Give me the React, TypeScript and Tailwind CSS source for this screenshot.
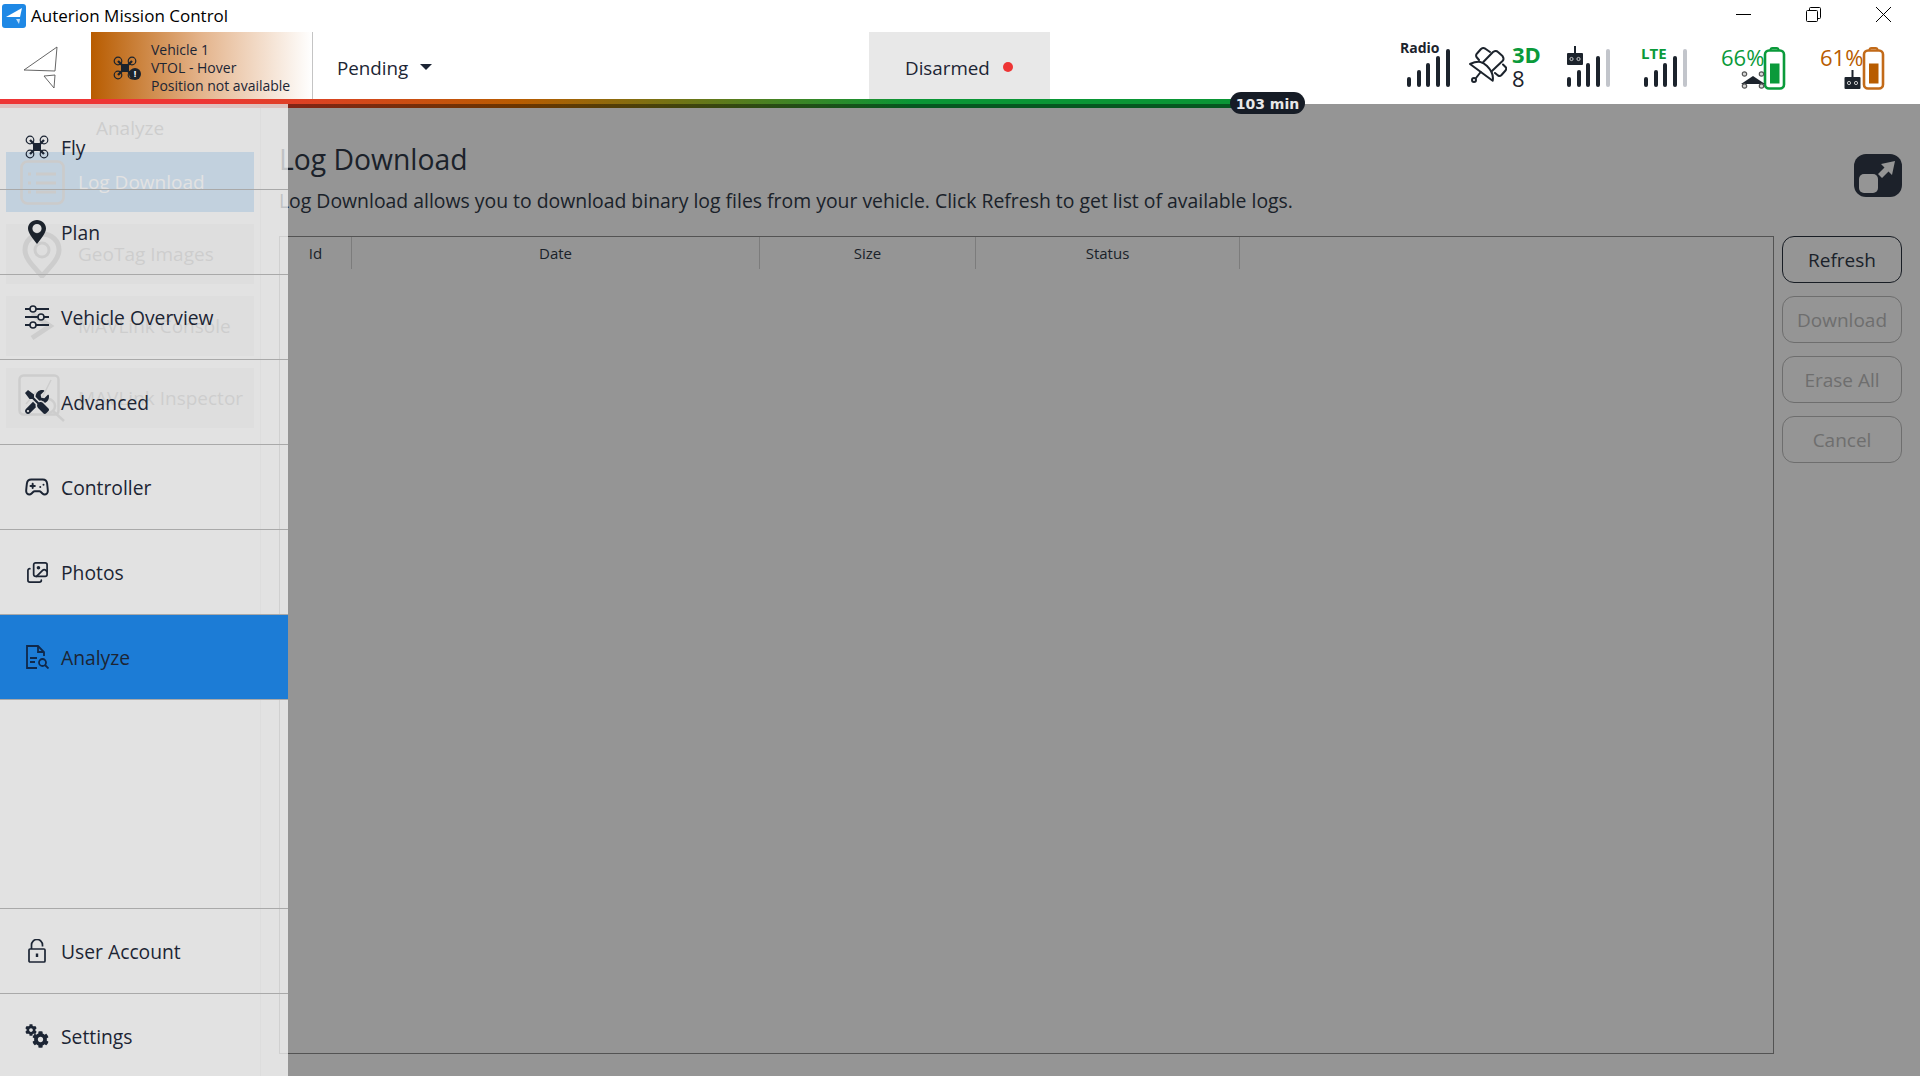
import { FaCog, FaTools } from "react-icons/fa";
import { Gamepad2, Images } from "lucide-react";

const font = { fontFamily: '"Open Sans", "Noto Sans", sans-serif' };

function Drone({ className }: { className?: string }) {
  return (
    <svg viewBox="0 0 24 24" className={className} fill="none" stroke="currentColor">
      <path d="M5 5 L19 19 M19 5 L5 19" strokeWidth="2.4" />
      <rect x="8" y="8" width="8" height="8" fill="currentColor" stroke="none" />
      <circle cx="5" cy="5" r="3.8" strokeWidth="1.2" />
      <circle cx="19" cy="5" r="3.8" strokeWidth="1.2" />
      <circle cx="5" cy="19" r="3.8" strokeWidth="1.2" />
      <circle cx="19" cy="19" r="3.8" strokeWidth="1.2" />
    </svg>
  );
}

function Pin() {
  return (
    <svg viewBox="0 0 18 24" className="w-[18px] h-[24px]">
      <path
        fillRule="evenodd"
        d="M9 0 C4 0 0 3.8 0 8.6 C0 13 5 19 9 24 C13 19 18 13 18 8.6 C18 3.8 14 0 9 0 Z M9 4 A4.6 4.6 0 1 1 9 13.2 A4.6 4.6 0 1 1 9 4 Z"
        fill="#1c232c"
      />
    </svg>
  );
}

function Sliders() {
  return (
    <svg viewBox="0 0 24 24" className="w-6 h-6" fill="#e2e2e2" stroke="currentColor" strokeWidth="1.6">
      <path d="M0 4 H24 M0 12 H24 M0 20 H24" strokeWidth="1.8" />
      <circle cx="8" cy="4" r="3" />
      <circle cx="16" cy="12" r="3" />
      <circle cx="8" cy="20" r="3" />
    </svg>
  );
}

function AnalyzeIcon() {
  return (
    <svg viewBox="0 0 24 24" className="w-6 h-6" fill="none" stroke="#10284a" strokeWidth="1.8">
      <path d="M12 23 H2 V1 H13 L19 7 V11" />
      <path d="M13 1 V7 H19" />
      <path d="M5 13 H12 M5 17 H10" />
      <circle cx="17.5" cy="17.5" r="3.5" />
      <path d="M20 20 L23.5 23.5" />
    </svg>
  );
}

function LockIcon() {
  return (
    <svg viewBox="0 0 18 24" className="w-[18px] h-[24px]" fill="none" stroke="#1c2534" strokeWidth="1.7">
      <rect x="1" y="10" width="16" height="13" rx="1" />
      <path d="M3.5 10 V6 A5.5 5.5 0 0 1 14.5 6 V7.5" />
      <path d="M9 14.5 V18" strokeWidth="2.4" />
    </svg>
  );
}

function GearsIcon() {
  return (
    <div className="relative w-[24px] h-[24px] text-[#1c2534]">
      <FaCog size={12} className="absolute left-0 top-0" />
      <FaCog size={17} className="absolute right-0 bottom-0" />
    </div>
  );
}

function RcBox({ className }: { className?: string }) {
  return (
    <svg viewBox="0 0 16 19" className={className}>
      <rect x="7" y="0" width="2" height="8" fill="#1c232c" />
      <rect x="0" y="7" width="16" height="12" rx="1" fill="#1c232c" />
      <circle cx="4.5" cy="13" r="1.6" fill="none" stroke="#d8d8d8" strokeWidth="0.9" />
      <circle cx="11.5" cy="13" r="1.6" fill="none" stroke="#d8d8d8" strokeWidth="0.9" />
    </svg>
  );
}

function SignalBars({ lastOff }: { lastOff?: boolean }) {
  const heights = [10, 17, 24, 31, 38];
  return (
    <div className="flex items-end gap-[5.7px] h-[38px]">
      {heights.map((h, i) => (
        <div
          key={i}
          className={`w-[4px] rounded-full ${lastOff && i === 4 ? "bg-[#c2c5cb]" : "bg-[#1c232c]"}`}
          style={{ height: h }}
        />
      ))}
    </div>
  );
}

function Battery({ color, fill }: { color: string; fill: string }) {
  return (
    <svg viewBox="0 0 22 43" className="w-[23px] h-[43px]" fill="none">
      <path d="M7 3 Q7 1 9 1 H13 Q15 1 15 3" stroke={color} strokeWidth="2" />
      <rect x="1.5" y="3.5" width="19" height="38" rx="4" stroke={color} strokeWidth="2.6" />
      <rect x="6.5" y="16.5" width="9.5" height="20" fill={fill} />
    </svg>
  );
}

function NavRow({ icon, label, active }: { icon: React.ReactNode; label: string; active?: boolean }) {
  return (
    <div
      className={`h-[85px] flex items-center shrink-0 border-b border-[#a9a9a9] ${active ? "bg-[#1c7cd6]" : ""}`}
    >
      <div className="w-[61px] flex justify-center pl-[13px] text-[#1c2534]">{icon}</div>
      <span className="mt-[2px] text-[19.3px] text-[#1c2534]">{label}</span>
    </div>
  );
}

function GhostRow({ icon, label, selected }: { icon: React.ReactNode; label: string; selected?: boolean }) {
  return (
    <div className={`h-[60px] flex items-center ${selected ? "bg-[#3e96e7] text-white" : "bg-[#e7e7e7] text-[#808080]"}`}>
      <div className="w-[72px] flex justify-center">{icon}</div>
      <span className="text-[19px]">{label}</span>
    </div>
  );
}

function ActionButton({ label, enabled }: { label: string; enabled?: boolean }) {
  return (
    <div
      className={`h-[47px] pt-[2px] flex items-center justify-center rounded-[12px] border text-[19px] ${
        enabled ? "border-[#2a323e] text-[#303a48]" : "border-[#bcbcbc] text-[#bdbdbd]"
      }`}
    >
      {label}
    </div>
  );
}

export default function App() {
  return (
    <div className="relative w-full h-[1076px] overflow-hidden bg-white flex flex-col" style={font}>
      {/* window title bar */}
      <div className="h-[32px] flex items-center shrink-0">
        <div className="ml-[2px] w-[24px] h-[24px] rounded-[3px] bg-[#1e88e5] flex items-center justify-center">
          <svg viewBox="0 0 24 24" className="w-[24px] h-[24px]">
            <path d="M4 13 L20 4 L18 13 Z" fill="white" />
            <path d="M14 15 L18 15 L17 20 Z" fill="#bfe0fb" />
          </svg>
        </div>
        <span className="ml-[5px] text-[17px] text-black">Auterion Mission Control</span>
        <div className="ml-auto -mt-[3px] flex items-center pr-[29px] gap-[55px]">
          <svg viewBox="0 0 15 15" className="w-[15px] h-[15px]" fill="none" stroke="black">
            <path d="M0 7.5 H15" />
          </svg>
          <svg viewBox="0 0 15 15" className="w-[15px] h-[15px]" fill="none" stroke="black">
            <rect x="0.5" y="3.5" width="11" height="11" rx="1" />
            <path d="M3.5 3.5 V1.5 Q3.5 0.5 4.5 0.5 H13.5 Q14.5 0.5 14.5 1.5 V10.5 Q14.5 11.5 13.5 11.5 H11.5" />
          </svg>
          <svg viewBox="0 0 15 15" className="w-[15px] h-[15px]" fill="none" stroke="black">
            <path d="M0 0 L15 15 M15 0 L0 15" />
          </svg>
        </div>
      </div>

      {/* toolbar */}
      <div className="h-[72px] flex items-start shrink-0">
        <div className="w-[91px] h-[67px] flex items-center justify-center">
          <svg viewBox="0 0 36 44" className="w-[36px] h-[44px] mt-[2px] -ml-[10px]" fill="none" stroke="#555" strokeWidth="0.9">
            <path d="M1 25 L34 2 L32 26 Z" />
            <path d="M21 31 L32 30 L31 43 Z" />
          </svg>
        </div>
        <div className="w-[222px] h-[67px] flex items-center border-r border-[#c4c4c4] bg-[linear-gradient(90deg,#b85c00_0%,#e4b48c_50%,#ffffff_100%)]">
          <div className="relative w-[60px] flex justify-center pl-[8px] pt-[4px] text-[#1c232c]">
            <Drone className="w-[24px] h-[24px]" />
            <div className="absolute left-[38px] top-[16px] w-[12px] h-[12px] rounded-full bg-[#1c232c] text-white text-[9px] font-bold leading-[12px] text-center">!</div>
          </div>
          <div className="pt-[4px] text-[14px] leading-[18px] text-[#1c2534] whitespace-nowrap">
            <div>Vehicle 1</div>
            <div>VTOL - Hover</div>
            <div>Position not available</div>
          </div>
        </div>
        <div className="w-[556px] shrink-0 h-[67px] pt-[5px] flex items-center pl-[24px] text-[18.8px] text-[#1c2534]">
          Pending
          <div className="ml-[12px] -mt-[2px] w-0 h-0 border-x-[6px] border-x-transparent border-t-[6px] border-t-[#1c2534]" />
        </div>
        <div className="w-[181px] h-[67px] pt-[5px] bg-[#e8e8e8] flex items-center pl-[36px] text-[18.8px] text-[#1c2534]">
          Disarmed
          <div className="ml-[13px] -mt-[3px] w-[10px] h-[10px] rounded-full bg-[#ee3535]" />
        </div>

        {/* status indicators */}
        <div className="ml-auto h-[67px] relative w-[525px] shrink-0">
          <div className="absolute left-[5px] top-[8px] text-[14px] leading-[16px] font-bold text-[#1c232c]">Radio</div>
          <div className="absolute left-[12px] top-[17px]"><SignalBars /></div>

          <svg viewBox="0 0 38 40" className="absolute left-[74px] top-[15px] w-[38px] h-[40px]" fill="none" stroke="#1c232c" strokeWidth="2" strokeLinecap="round" strokeLinejoin="round">
            <path d="M14.3 15 L24 5 Q27 3 29 5 L33.5 9 Q35.5 12 33.5 14 L22.7 24.3" />
            <path d="M1 17 C10 13 14 15 18 19 C22 23 25 27 23.7 33.7 Z" />
            <circle cx="5" cy="33" r="2" />
            <path d="M7 31 L11.7 25" />
            <path d="M10 13 L7.5 10 Q6.5 8 8 6.5 L12 2 Q14 0.5 16 1.5 L21 5" />
            <path d="M26 26 L29 28.5 Q31 29.5 32.5 28 L36.5 23.5 Q38 21.5 36.5 20 L34 17.5" />
          </svg>
          <div className="absolute left-[117px] top-[10px] text-[22px] leading-[24px] font-bold text-[#0a9a3a]">3D</div>
          <div className="absolute left-[117px] top-[34px] text-[22px] leading-[24px] text-[#1c232c]">8</div>

          <RcBox className="absolute left-[172px] top-[14px] w-[16px] h-[19px]" />
          <div className="absolute left-[172px] top-[17px]"><SignalBars lastOff /></div>

          <div className="absolute left-[246px] top-[13px] text-[15px] leading-[16px] font-bold text-[#0a9a3a]">LTE</div>
          <div className="absolute left-[249px] top-[17px]"><SignalBars lastOff /></div>

          <div className="absolute left-[326px] top-[13px] text-[22px] leading-[24px] text-[#0a9a3a]">66%</div>
          <div className="absolute left-[368px] top-[15px]"><Battery color="#0a9a3a" fill="#0a9a3a" /></div>
          <svg viewBox="0 0 24 18" className="absolute left-[346px] top-[39px] w-[24px] h-[18px]">
            <path d="M0 13 L12 5 L24 13 Z" fill="#1c232c" />
            <g fill="#d8d8d8" stroke="#555" strokeWidth="1.2">
              <circle cx="3.5" cy="3" r="2.2" />
              <circle cx="20.5" cy="3" r="2.2" />
              <circle cx="3.5" cy="15" r="2.2" />
              <circle cx="20.5" cy="15" r="2.2" />
            </g>
          </svg>

          <div className="absolute left-[425px] top-[13px] text-[22px] leading-[24px] text-[#b85c00]">61%</div>
          <div className="absolute left-[467px] top-[15px]"><Battery color="#c26a18" fill="#b85c00" /></div>
          <RcBox className="absolute left-[449px] top-[38px] w-[17px] h-[19px]" />
        </div>
      </div>

      {/* page under the drawer */}
      <div className="flex-1 min-h-0 flex bg-white">
        <div className="w-[261px] shrink-0 border-r border-[#e2e2e2] pl-[6px] pr-[6px]">
          <div className="h-[48px] flex items-center justify-center text-[19px] text-[#808080]">Analyze</div>
          <div className="flex flex-col gap-3">
            <GhostRow
              selected
              label="Log Download"
              icon={
                <svg viewBox="0 0 45 45" className="w-[45px] h-[45px]" fill="none" stroke="#707070" strokeWidth="2.6">
                  <rect x="1.5" y="1.5" width="42" height="42" rx="6" />
                  <path d="M16 14 H36 M16 23 H36 M16 32 H36 M8 14 H11 M8 23 H11 M8 32 H11" strokeWidth="3" />
                </svg>
              }
            />
            <GhostRow
              label="GeoTag Images"
              icon={
                <svg viewBox="0 0 40 47" className="w-[40px] h-[47px]" fill="none" stroke="#808080" strokeWidth="5">
                  <path d="M20 45 C12 36 3 28 3 19 C3 10 10 3 20 3 C30 3 37 10 37 19 C37 28 28 36 20 45 Z" />
                  <circle cx="20" cy="19" r="7" strokeWidth="3" />
                </svg>
              }
            />
            <GhostRow
              label="MAVLink Console"
              icon={
                <svg viewBox="0 0 40 40" className="w-[40px] h-[40px]" fill="none" stroke="#808080" strokeWidth="5">
                  <path d="M10 8 L28 20 L10 32" />
                </svg>
              }
            />
            <GhostRow
              label="MAVLink Inspector"
              icon={
                <svg viewBox="0 0 48 48" className="w-[48px] h-[48px]" fill="none" stroke="#808080" strokeWidth="2.5">
                  <rect x="1.5" y="1.5" width="39" height="39" rx="4" />
                  <path d="M8 30 L18 18 L24 24 L33 6" strokeWidth="1.5" />
                  <circle cx="30" cy="32" r="7" />
                  <path d="M35 37 L46 47" />
                </svg>
              }
            />
          </div>
        </div>

        <div className="flex-1 min-w-0 flex pl-[18px] pr-[18px]">
          <div className="flex-1 min-w-0 flex flex-col">
            <div className="h-[132px] shrink-0 text-[#303a48]">
              <h1 className="pt-[32px] text-[28.3px] leading-[46px] font-normal">Log Download</h1>
              <p className="mt-[5px] text-[19.4px] leading-[28px]">
                Log Download allows you to download binary log files from your vehicle. Click Refresh to get list of available logs.
              </p>
            </div>
            <div className="flex-1 min-h-0 mb-[22px] border border-[#8f8f8f]">
              <div className="grid grid-cols-[72px_408px_216px_264px] h-[32px] text-[15px] text-[#303a48] text-center">
                <div className="border-r border-[#d4d4d4] leading-[32px]">Id</div>
                <div className="border-r border-[#d4d4d4] leading-[32px]">Date</div>
                <div className="border-r border-[#d4d4d4] leading-[32px]">Size</div>
                <div className="border-r border-[#d4d4d4] leading-[32px]">Status</div>
              </div>
            </div>
          </div>
          <div className="w-[120px] ml-[8px] shrink-0 flex flex-col">
            <div className="h-[132px] shrink-0 flex justify-end pt-[50px]">
              <div className="w-[48px] h-[43px] rounded-[12px] bg-[#303a48] relative">
                <div className="absolute left-[5px] bottom-[4px] w-[19px] h-[19px] rounded-[5px] bg-white" />
                <svg viewBox="0 0 20 20" className="absolute right-[6px] top-[6px] w-[20px] h-[20px]">
                  <path d="M19 1 L16 15 L12.5 11.5 L6 18 L2 14 L8.5 7.5 L5 4 Z" fill="white" />
                </svg>
              </div>
            </div>
            <div className="flex flex-col gap-[13px]">
              <ActionButton enabled label="Refresh" />
              <ActionButton label="Download" />
              <ActionButton label="Erase All" />
              <ActionButton label="Cancel" />
            </div>
          </div>
        </div>
      </div>

      {/* time remaining bar */}
      <div className="absolute left-0 top-[99px] w-[1265px] h-[9px] bg-[linear-gradient(90deg,#ee3535_0%,#ee3535_16%,#b85c00_41%,#0a9635_72%,#0a9635_100%)]" />

      {/* modal dim layer */}
      <div className="absolute left-0 right-0 top-[104px] bottom-0 bg-black/[0.416]" />

      {/* drawer */}
      <div className="absolute left-0 top-[104px] w-[288px] h-[975px] pt-[1px] bg-white/[0.726] flex flex-col">
        <NavRow label="Fly" icon={<Drone className="w-[24px] h-[24px]" />} />
        <NavRow label="Plan" icon={<Pin />} />
        <NavRow label="Vehicle Overview" icon={<Sliders />} />
        <NavRow label="Advanced" icon={<FaTools size={24} />} />
        <NavRow label="Controller" icon={<Gamepad2 size={26} strokeWidth={1.8} />} />
        <NavRow label="Photos" icon={<Images size={23} strokeWidth={1.8} />} />
        <NavRow active label="Analyze" icon={<AnalyzeIcon />} />
        <div className="flex-1 border-b border-[#a9a9a9]" />
        <NavRow label="User Account" icon={<LockIcon />} />
        <NavRow label="Settings" icon={<GearsIcon />} />
      </div>

      {/* time pill */}
      <div className="absolute left-[1230px] top-[92px] w-[75px] h-[22px] pt-[2px] rounded-full bg-[#161c26] flex items-center justify-center text-[14px] font-bold text-[#e8e8e8] font-['DejaVu_Sans']">
        103 min
      </div>
    </div>
  );
}
